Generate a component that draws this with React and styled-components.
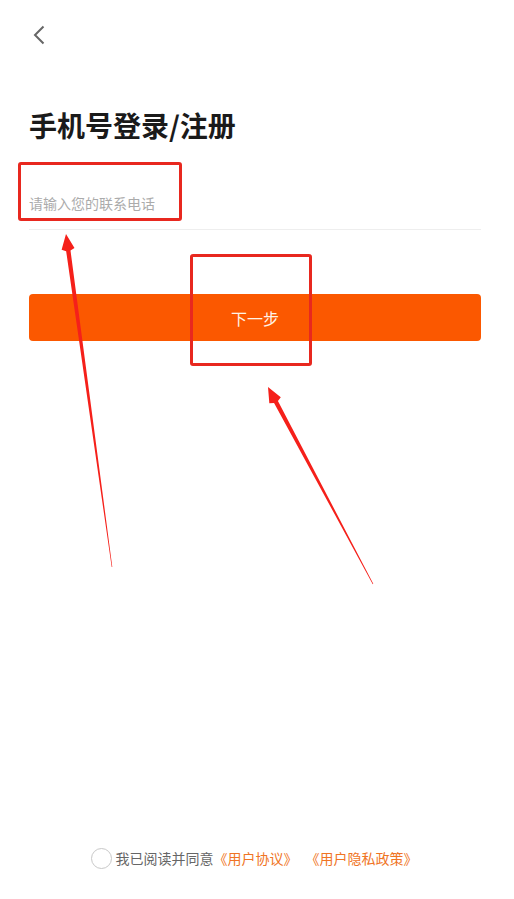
import styled, { createGlobalStyle } from 'styled-components';

const GlobalStyle = createGlobalStyle`
    body {
        margin: 0;
        background: #ffffff;
        font-family: "Noto Sans CJK SC", "Noto Sans", sans-serif;
    }
`;

// annotation arrow: tapered shaft with a triangular head, from tail (x1,y1) to tip (x2,y2)
function Arrow({ x1, y1, x2, y2 }) {
    const dx = x2 - x1;
    const dy = y2 - y1;
    const len = Math.sqrt(dx * dx + dy * dy);
    const ux = dx / len, uy = dy / len;
    const nx = -uy, ny = ux;
    const headLen = 17, headHalf = 6.5, shaft = 2.2, tail = 0.3;
    const bx = x2 - ux * headLen, by = y2 - uy * headLen;
    const pts = [
        [x1 + nx * tail, y1 + ny * tail],
        [bx + nx * shaft, by + ny * shaft],
        [bx + nx * headHalf + ux * 2, by + ny * headHalf + uy * 2],
        [x2, y2],
        [bx - nx * headHalf + ux * 2, by - ny * headHalf + uy * 2],
        [bx - nx * shaft, by - ny * shaft],
        [x1 - nx * tail, y1 - ny * tail],
    ];
    return <polygon points={pts.map(p => p.join(',')).join(' ')} fill="#f5201a" />;
}

function App() {
    return (
        <>
            <GlobalStyle />
            <Page>
                <NavBar>
                    <BackButton aria-label="back">
                        <svg width="14" height="20" viewBox="0 0 14 20">
                            <path d="M11.5 1.5 L3 10 L11.5 18.5" fill="none" stroke="#666" strokeWidth="2" />
                        </svg>
                    </BackButton>
                </NavBar>
                <Title>手机号登录/注册</Title>
                <Field>
                    <PhoneInput placeholder="请输入您的联系电话" />
                </Field>
                <NextButton>下一步</NextButton>
                <Footer>
                    <Radio />
                    <Agree>我已阅读并同意</Agree>
                    <Link>《用户协议》</Link>
                    <Link>《用户隐私政策》</Link>
                </Footer>

                <Marker $x={18} $y={162} $w={164} $h={59} />
                <Marker $x={190} $y={254} $w={122} $h={112} />
                <Overlay width="514" height="899" viewBox="0 0 514 899">
                    <Arrow x1={112} y1={567} x2={66} y2={234} />
                    <Arrow x1={373} y1={584} x2={268} y2={387} />
                </Overlay>
            </Page>
        </>
    );
}

const Page = styled.div`
    position: relative;
    min-height: 899px;
    box-sizing: border-box;
    display: flex;
    flex-direction: column;
    padding: 0 33px 0 29px;
    overflow: hidden;
`;

const NavBar = styled.div`
    height: 72px;
    display: flex;
    align-items: flex-start;
    padding-top: 25px;
    box-sizing: border-box;
`;

const BackButton = styled.button`
    border: none;
    background: transparent;
    padding: 0;
    margin-left: 2px;
    width: 16px;
    height: 22px;
    cursor: pointer;
`;

const Title = styled.h1`
    margin: 33px 0 0;
    font-size: 28px;
    line-height: 40px;
    font-weight: 700;
    color: #1a1a1a;
    letter-spacing: 0;
`;

const Field = styled.div`
    margin-top: 45px;
    border-bottom: 1px solid #eeeeee;
    padding-bottom: 15px;
`;

const PhoneInput = styled.input`
    border: none;
    outline: none;
    padding: 0;
    width: 100%;
    font-family: "Noto Sans CJK SC", sans-serif;
    font-size: 14px;
    line-height: 20px;
    height: 20px;
    color: #333;
    &::placeholder {
        color: #ababab;
    }
`;

const NextButton = styled.button`
    margin-top: 64px;
    height: 47px;
    border: none;
    border-radius: 4px;
    background: #fb5800;
    color: #fff3e6;
    font-family: "Noto Sans CJK SC", sans-serif;
    font-size: 16px;
    cursor: pointer;
`;

const Footer = styled.div`
    margin-top: auto;
    margin-bottom: 30px;
    display: flex;
    align-items: center;
    justify-content: center;
    font-size: 14px;
    line-height: 22px;
    padding-right: 2px;
`;

const Radio = styled.span`
    width: 19px;
    height: 19px;
    border: 1px solid #c8c8c8;
    border-radius: 50%;
    margin-right: 4px;
`;

const Agree = styled.span`
    color: #666666;
`;

const Link = styled.span`
    color: #f07424;
    & + & {
        margin-left: 8px;
    }
`;

const Marker = styled.div`
    position: absolute;
    left: ${p => p.$x}px;
    top: ${p => p.$y}px;
    width: ${p => p.$w}px;
    height: ${p => p.$h}px;
    box-sizing: border-box;
    border: 3px solid #e8281f;
    border-radius: 3px;
    pointer-events: none;
`;

const Overlay = styled.svg`
    position: absolute;
    left: 0;
    top: 0;
    pointer-events: none;
`;

export default App;
